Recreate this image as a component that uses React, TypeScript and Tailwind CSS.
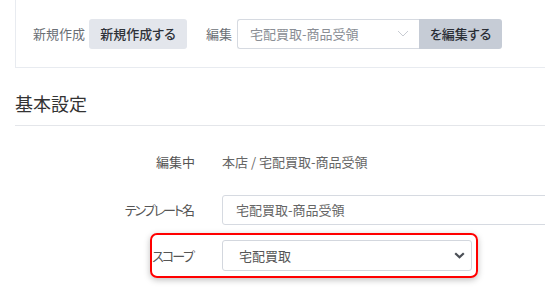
import React from "react";

const font = {
  fontFamily: '"Noto Sans CJK JP", "Noto Sans", sans-serif',
};

function ThinChevron() {
  return (
    <svg width="12" height="7" viewBox="0 0 12 7" fill="none">
      <path d="M1 1L6 6L11 1" stroke="#c8ccd3" strokeWidth="1" />
    </svg>
  );
}

function BoldChevron() {
  return (
    <svg width="11" height="7" viewBox="0 0 11 7" fill="none">
      <path d="M1.2 1.2L5.5 5.2L9.8 1.2" stroke="#4b4f56" strokeWidth="2.2" />
    </svg>
  );
}

export default function App() {
  return (
    <div
      className="w-[545px] h-[299px] overflow-hidden bg-white text-[13px] [font-feature-settings:'palt']"
      style={font}
    >
      {/* top bar */}
      <div className="ml-[15px] h-[68px] border-l border-b border-[#e8ebf0] flex items-center pl-[17px]">
        <span className="text-[#6b6f76] leading-none whitespace-nowrap">新規作成</span>
        <button className="ml-[4px] h-[30px] w-[98px] rounded-[3px] bg-[#e3e6ec] text-[#2e3238] font-medium flex items-center justify-center shrink-0">
          新規作成する
        </button>
        <span className="ml-[19px] text-[#6b6f76] whitespace-nowrap">編集</span>
        <div className="ml-[5px] h-[30px] w-[182px] border border-[#d6dae1] border-r-0 rounded-l-[3px] flex items-center pl-[12px] pr-[10px] justify-between shrink-0">
          <span className="text-[#8a8e95]">宅配買取-商品受領</span>
          <ThinChevron />
        </div>
        <button className="h-[30px] w-[83px] rounded-r-[3px] bg-[#c6ccd6] text-[#2a2e35] font-medium flex items-center justify-center shrink-0">
          を編集する
        </button>
      </div>

      {/* heading */}
      <div className="ml-[15px] h-[58px] border-b border-[#e4e6ea] pt-[22px]">
        <div className="text-[18px] leading-[26px] text-[#333]">基本設定</div>
      </div>

      {/* form */}
      <div className="pt-[21px]">
        <div className="flex items-center h-[30px]">
          <div className="w-[195px] shrink-0 text-right text-[#555] whitespace-nowrap">編集中</div>
          <div className="ml-[27px] text-[#666] whitespace-nowrap">本店 / 宅配買取-商品受領</div>
        </div>

        <div className="flex items-center h-[30px] mt-[18px]">
          <div className="w-[195px] shrink-0 text-right text-[#555] whitespace-nowrap">
            <span className="tracking-[-2px]">テンプレート</span>名
          </div>
          <div className="ml-[27px] h-[30px] w-[340px] border border-[#d6dae1] rounded-l-[3px] flex items-center pl-[13px] text-[#666] shrink-0">
            宅配買取-商品受領
          </div>
        </div>

        <div className="ml-[150px] mt-[8px] w-[328px] h-[45px] border-2 border-[#ff0000] rounded-[7px] shadow-[0_2px_6px_rgba(0,0,0,0.25)] flex items-center">
          <div className="w-[43px] shrink-0 text-right text-[#555] whitespace-nowrap">
            <span className="tracking-[-2px]">スコー</span>プ
          </div>
          <div className="ml-[27px] h-[31px] w-[250px] shrink-0 border border-[#d3d7de] rounded-[3px] flex items-center justify-between pl-[16px] pr-[6px] text-[#555]">
            <span>宅配買取</span>
            <BoldChevron />
          </div>
        </div>
      </div>
    </div>
  );
}
